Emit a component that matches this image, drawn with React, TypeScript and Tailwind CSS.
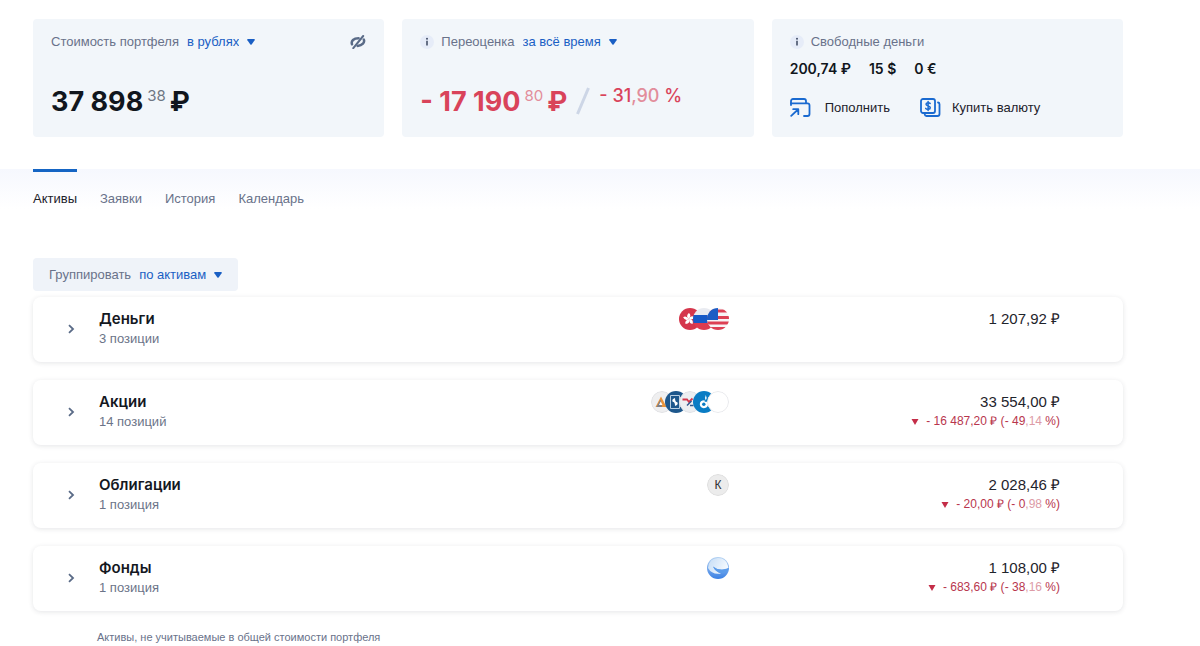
import type React from "react"

interface PickerProps {
  id: string
  label: string
  options: string[]
}

const Picker: React.FC<PickerProps> = ({ id, label, options }) => (
  <div className="flex items-center gap-2">
    <label htmlFor={id}>{label}</label>
    <span className="relative flex items-center text-[#1a5fc4]">
      <select id={id} className="field-sizing-content appearance-none bg-transparent pr-4 leading-5">
        {options.map((option) => (
          <option key={option}>{option}</option>
        ))}
      </select>
      <svg viewBox="0 0 8 6" className="pointer-events-none absolute right-0 h-[6px] w-2" fill="currentColor">
        <path d="M.8 0h6.4q1 .2.4 1.200L4.600 5.400q-.6.700-1.200 0L.400 1.200Q-.2.200.800 0z" />
      </svg>
    </span>
  </div>
)

const InfoIcon: React.FC = () => (
  <svg viewBox="0 0 14 14" className="h-[14px] w-[14px] shrink-0">
    <circle cx="7" cy="7" r="7" fill="#e6ecf8" />
    <path d="M7 5.800v4.700" fill="none" stroke="#445068" strokeWidth="1.600" />
    <circle cx="7" cy="3.700" r="1" fill="#445068" />
  </svg>
)

const EyeOffIcon: React.FC = () => (
  <svg viewBox="0 0 16 14" className="h-[14px] w-4" fill="none" stroke="#5a6b87" strokeLinecap="round">
    <path d="M2 9.300C.8 6 3.600 3.200 8.600 3.200" strokeWidth="2.500" />
    <path d="M13.800 4.600c1.200 2.700-1.400 5.900-6.200 6.300" strokeWidth="2.500" />
    <path d="M13.200 1 3.300 13.200" strokeWidth="2" />
  </svg>
)

const DepositIcon: React.FC = () => (
  <svg viewBox="0 0 21 20" className="h-5 w-[21px]" fill="none" stroke="#1a6ad0" strokeWidth="1.800" strokeLinecap="round" strokeLinejoin="round">
    <path d="M1 7V3a2 2 0 0 1 2-2h11a2 2 0 0 1 2 2v2" />
    <path d="M1 5.300h16.500a2 2 0 0 1 2 2V16a2 2 0 0 1-2 2H14" />
    <path d="M1.200 17.800 8 11.500M3.200 11.200H8.300V16.200" />
  </svg>
)

const CurrencyIcon: React.FC = () => (
  <svg viewBox="0 0 21 20" className="h-5 w-[21px]" fill="none" stroke="#1a6ad0" strokeWidth="1.800" strokeLinecap="round" strokeLinejoin="round">
    <rect x="1" y="1" width="14" height="14" rx="2" />
    <path d="M18 4.500a1.800 1.800 0 0 1 1.500 1.800V16a2 2 0 0 1-2 2H6.500A2 2 0 0 1 4.700 16.500" />
    <path d="M10.200 5.500C9.500 4.500 6 4.400 6 6.300S10.300 7.700 10.300 9.700 6.400 11.700 5.700 10.400M8.100 3.500v9" strokeWidth="1.500" />
  </svg>
)

// Round 22px logos shown in the middle of each row
const logos = {
  hongKong: (
    <>
      <rect width="22" height="22" fill="#d5364c" />
      <g fill="#fff" transform="translate(-1 0)">
        <path d="M11 11Q7.200 8.500 10.800 4.900q3 1.700.2 6.100z" />
        <path d="M11 11Q7.200 8.500 10.800 4.900q3 1.700.2 6.100z" transform="rotate(72 11 11)" />
        <path d="M11 11Q7.200 8.500 10.800 4.900q3 1.700.2 6.100z" transform="rotate(144 11 11)" />
        <path d="M11 11Q7.200 8.500 10.800 4.900q3 1.700.2 6.100z" transform="rotate(216 11 11)" />
        <path d="M11 11Q7.200 8.500 10.800 4.900q3 1.700.2 6.100z" transform="rotate(288 11 11)" />
      </g>
    </>
  ),
  russia: (
    <>
      <rect width="22" height="7" fill="#e9ebf1" />
      <rect y="7" width="22" height="8" fill="#1659c7" />
      <rect y="15" width="22" height="7" fill="#dd3b50" />
    </>
  ),
  usa: (
    <>
      <rect width="22" height="22" fill="#f7f4f6" />
      <path d="M0 3h22M0 9.500h22M0 15h22M0 20.500h22" stroke="#dd4054" strokeWidth="2.800" />
      <rect width="11" height="12" fill="#1d5dc4" />
    </>
  ),
  triangle: (
    <>
      <circle cx="11" cy="11" r="10.500" fill="#efeff0" stroke="#e0e1e4" />
      <path d="M10 5.500 15.500 16H4.500z" fill="#e8933a" />
      <path d="M9.500 8.500 11 16H5.500z" fill="#7c808c" />
      <path d="M9.700 10.500 11.500 14H8z" fill="#fff" />
    </>
  ),
  navy: (
    <>
      <rect width="22" height="22" fill="#1d578c" />
      <path d="M5.500 4.500h9v13h-9z" fill="none" stroke="#b9cfe2" strokeWidth="1" />
      <path d="M10 7q-3.600 1.200-2.400 3.800 2.400 0 2.400 4.200 3.600-1.200 2.400-3.800-2.400 0-2.400-4.200z" fill="#fff" />
    </>
  ),
  redArrow: (
    <>
      <circle cx="11" cy="11" r="10.500" fill="#eceef1" stroke="#dfe1e5" />
      <path d="M3.500 8.500h4.500l2 2.500 3.500-3.500" fill="none" stroke="#d5364c" strokeWidth="1.800" />
      <path d="M8 14.500 12.500 10M11 14.500h3.500" stroke="#31588f" strokeWidth="1.500" />
    </>
  ),
  gas: (
    <>
      <rect width="22" height="22" fill="#0a7cc4" />
      <path
        d="M12.800 4q1.600 2.600 0 5.400-1.500-2.500 0-5.400zM11.500 9.300q-4.700.2-4.700 4 .2 3.600 4 3.900 4.600-.2 4.800-6.500h-3.800"
        fill="#fff"
      />
      <circle cx="10.800" cy="13.200" r="1.700" fill="#0a7cc4" />
    </>
  ),
  blank: <circle cx="11" cy="11" r="10.500" fill="#fff" stroke="#e8e9ec" />,
  letter: (
    <>
      <circle cx="11" cy="11" r="10.500" fill="#ececec" stroke="#dedede" />
      <text x="11" y="15" textAnchor="middle" fontSize="12" fill="#333">
        К
      </text>
    </>
  ),
  wave: (
    <>
      <defs>
        <linearGradient id="sky" x1="0" y1="0" x2="0" y2="1">
          <stop offset="0" stopColor="#b4d2f2" />
          <stop offset="1" stopColor="#3a80e4" />
        </linearGradient>
        <linearGradient id="crest" x1="0" y1="0" x2="1" y2="0.400">
          <stop offset="0" stopColor="#c4dcf6" />
          <stop offset="1" stopColor="#f4f9fe" />
        </linearGradient>
      </defs>
      <rect width="22" height="22" fill="url(#sky)" />
      <path d="M1 11Q2 1 11 1q9 0 10.500 9.500-1.500 2-6 2.500Q9 12.500 6 9.500 8 14 14 16.500 5 18 1 11z" fill="url(#crest)" />
      <path d="M6 9.500q6 5 16 1.500-1 5-7 5.500Q8 15 6 9.500z" fill="#5a9bea" />
    </>
  ),
}

interface AssetGroup {
  title: string
  count: string
  logos: (keyof typeof logos)[]
  amount: string
  change?: { value: string; whole: string; cents: string }
}

const groups: AssetGroup[] = [
  { title: "Деньги", count: "3 позиции", logos: ["hongKong", "russia", "usa"], amount: "1 207,92 ₽" },
  {
    title: "Акции",
    count: "14 позиций",
    logos: ["triangle", "navy", "redArrow", "gas", "blank"],
    amount: "33 554,00 ₽",
    change: { value: "- 16 487,20 ₽", whole: "- 49", cents: ",14" },
  },
  {
    title: "Облигации",
    count: "1 позиция",
    logos: ["letter"],
    amount: "2 028,46 ₽",
    change: { value: "- 20,00 ₽", whole: "- 0", cents: ",98" },
  },
  {
    title: "Фонды",
    count: "1 позиция",
    logos: ["wave"],
    amount: "1 108,00 ₽",
    change: { value: "- 683,60 ₽", whole: "- 38", cents: ",16" },
  },
]

const AssetRow: React.FC<{ group: AssetGroup }> = ({ group }) => (
  <li className="grid grid-cols-[66px_19fr_10fr] rounded-lg bg-white pt-3 pr-[63px] pb-[14px] shadow-[0_1px_5px_rgba(30,40,60,0.12)]">
    <button type="button" aria-label={`Развернуть: ${group.title}`} className="flex items-center pl-[34px]">
      <svg viewBox="0 0 8 10" className="h-[10px] w-2" fill="none" stroke="#5a6b87" strokeWidth="1.800">
        <path d="M2 1.200 6 5 2 8.800" />
      </svg>
    </button>
    <div className="flex justify-between">
      <div>
        <h2 className="font-[Inter,sans-serif] text-[15px] leading-5 font-semibold text-[#14181f]">{group.title}</h2>
        <p className="leading-[19px] text-[#6b7488]">{group.count}</p>
      </div>
      <div className="flex h-5 items-center -space-x-2">
        {group.logos.map((name) => (
          <svg key={name} viewBox="0 0 22 22" className="h-[22px] w-[22px] rounded-full">
            {logos[name]}
          </svg>
        ))}
      </div>
    </div>
    <div className="text-right">
      <p className="text-[15px] leading-5 text-[#1f242c]">{group.amount}</p>
      {group.change && (
        <p className="flex items-center justify-end gap-[7px] text-xs leading-[19px] text-[#b8364d]">
          <svg viewBox="0 0 8 6" className="h-[6px] w-2" fill="#c42d48">
            <path d="M.5 0h7L4 6z" />
          </svg>
          <span>
            {group.change.value} ({group.change.whole}
            <span className="text-[#dd9ba6]">{group.change.cents}</span> %)
          </span>
        </p>
      )}
    </div>
  </li>
)

const tabs = ["Активы", "Заявки", "История", "Календарь"]

export default function App() {
  return (
    <div className="bg-white font-['Liberation_Sans',Arial,sans-serif] text-[13px] leading-5 text-[#69728a]">
      <section className="grid grid-cols-3 gap-[18px] pt-[19px] pr-[77px] pb-8 pl-[33px]">
        <div className="rounded-sm bg-[#f2f6fa] px-[18px] pt-[13px] pb-[17px]">
          <div className="flex items-center justify-between">
            <Picker id="currency" label="Стоимость портфеля" options={["в рублях", "в долларах", "в евро"]} />
            <button type="button" aria-label="Скрыть суммы">
              <EyeOffIcon />
            </button>
          </div>
          <p className="mt-8 flex gap-1 font-[Inter,sans-serif] text-[27px] leading-9 font-bold text-[#11161d]">
            37 898
            <span className="text-[15px] leading-6 font-normal text-[#6f7683]">38</span>
            <span>₽</span>
          </p>
        </div>

        <div className="rounded-sm bg-[#f2f6fa] px-[18px] pt-[13px] pb-[17px]">
          <div className="flex items-center gap-[7px]">
            <InfoIcon />
            <Picker id="period" label="Переоценка" options={["за всё время", "за год", "за месяц"]} />
          </div>
          <div className="mt-8 flex font-[Inter,sans-serif] text-[#d9435a]">
            <p className="flex gap-1 text-[27px] leading-9 font-bold">
              - 17 190
              <span className="text-[15px] leading-6 font-normal text-[#e28d9b]">80</span>
              <span>₽</span>
            </p>
            <svg viewBox="0 0 14 28" className="mx-[9px] mt-[3px] h-7 w-[14px]" stroke="#cdd6e6" strokeWidth="3">
              <path d="M12.500 1 1.500 27" />
            </svg>
            <p className="text-lg leading-6 font-medium">
              - 31<span className="text-[#e28d9b]">,90</span> %
            </p>
          </div>
        </div>

        <div className="rounded-sm bg-[#f2f6fa] px-[18px] pt-[13px] pb-[17px]">
          <div className="flex items-center gap-[7px]">
            <InfoIcon />
            <span>Свободные деньги</span>
          </div>
          <div className="mt-[7px] flex gap-[18px] font-[Inter,sans-serif] text-sm leading-5 font-semibold text-[#11161d]">
            <span>200,74 ₽</span>
            <span>15 $</span>
            <span>0 €</span>
          </div>
          <div className="mt-[19px] flex gap-[30px] text-[#1c2129]">
            <button type="button" className="flex items-center gap-[14px]">
              <DepositIcon />
              Пополнить
            </button>
            <button type="button" className="flex items-center gap-[11px]">
              <CurrencyIcon />
              Купить валюту
            </button>
          </div>
        </div>
      </section>

      <main className="bg-linear-to-b from-[#f6f8fe] to-white to-[40px] pr-[77px] pb-[1px] pl-[33px]">
        <nav className="flex gap-[23px]">
          {tabs.map((tab, i) => (
            <a
              key={tab}
              href="#"
              className={
                i === 0
                  ? "border-t-[3px] border-[#1565c4] pt-[17px] text-[#1c2129]"
                  : "border-t-[3px] border-transparent pt-[17px]"
              }
            >
              {tab}
            </a>
          ))}
        </nav>

        <div className="mt-[49px] inline-flex h-[33px] items-center rounded-sm bg-[#eff3f9] px-4 align-top">
          <Picker id="group" label="Группировать" options={["по активам", "по валютам"]} />
        </div>

        <ul className="mt-[6px] flex flex-col gap-[18px]">
          {groups.map((group) => (
            <AssetRow key={group.title} group={group} />
          ))}
        </ul>

        <p className="mt-4 pl-16 text-[11px] leading-5">Активы, не учитываемые в общей стоимости портфеля</p>
      </main>
    </div>
  )
}
